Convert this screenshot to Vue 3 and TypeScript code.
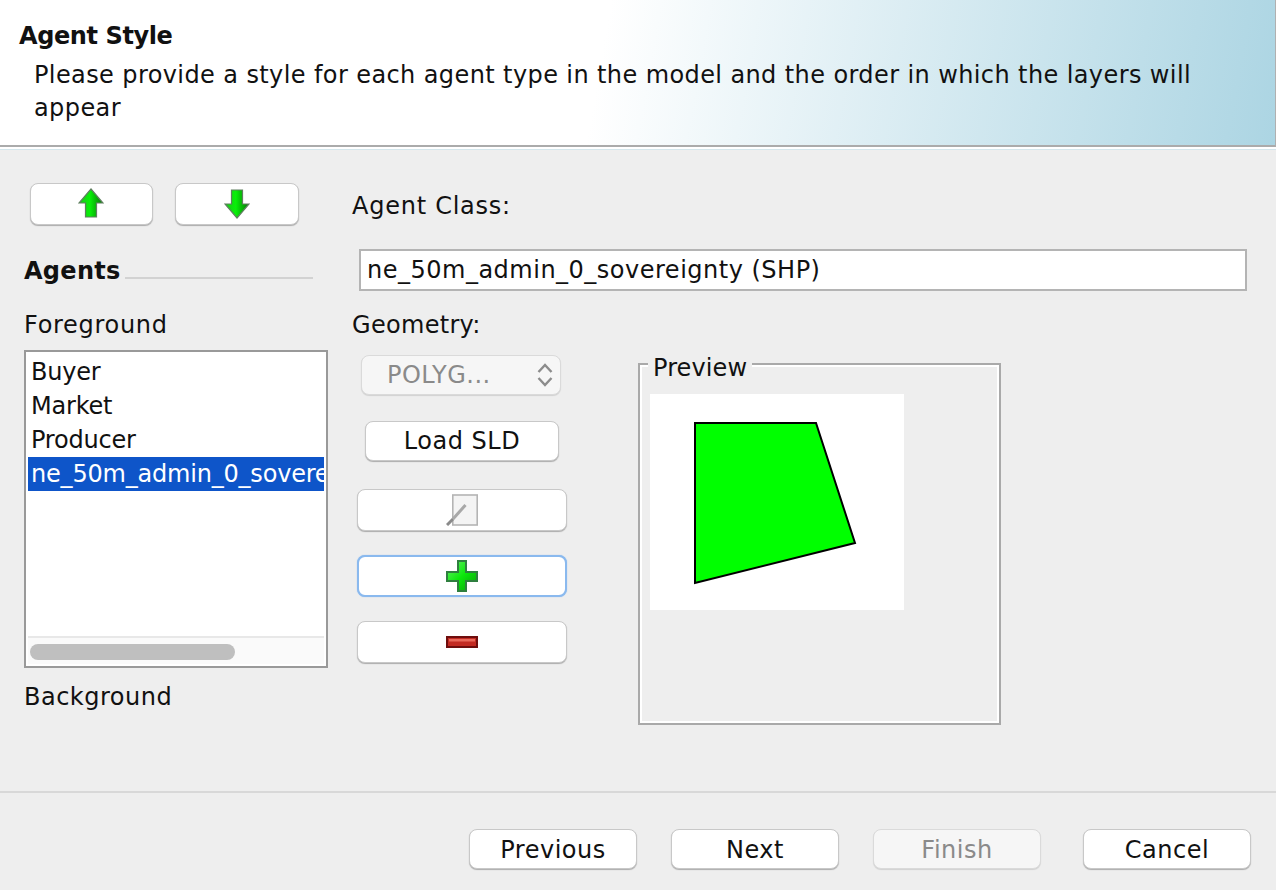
<script setup lang="ts">
const agents = ["Buyer", "Market", "Producer", "ne_50m_admin_0_sovereignty"]
const selected = 3
</script>

<template>
  <div class="wizard">
    <header class="banner">
      <h1>Agent Style</h1>
      <p>Please provide a style for each agent type in the model and the order in which the layers will appear</p>
    </header>
    <div class="banner-edge"></div>

    <main class="content">
      <section class="left">
        <div class="arrows">
          <button class="btn arrow">
            <svg class="up" width="26" height="30" viewBox="0 0 26 30">
              <defs>
                <linearGradient id="upFill" x1="0" x2="1" y1="0" y2="0">
                  <stop offset="0" stop-color="#1fc41f" />
                  <stop offset="0.45" stop-color="#08f008" />
                  <stop offset="0.7" stop-color="#07b807" />
                  <stop offset="1" stop-color="#067a06" />
                </linearGradient>
              </defs>
              <path d="M13 1 L25 15 H18.5 V29 H7.5 V15 H1 Z" fill="url(#upFill)" stroke="#5f7f5f" stroke-width="1.2" />
            </svg>
          </button>
          <button class="btn arrow wide">
            <svg width="26" height="30" viewBox="0 0 26 30">
              <path d="M13 29 L25 15 H18.5 V1 H7.5 V15 H1 Z" fill="url(#upFill)" stroke="#5f7f5f" stroke-width="1.2" />
            </svg>
          </button>
        </div>

        <div class="agents-head">
          <span>Agents</span>
          <i></i>
        </div>

        <div class="label foreground">Foreground</div>
        <div class="list">
          <ul>
            <li v-for="(a, i) in agents" :key="a" :class="{ sel: i === selected }">{{ a }}</li>
          </ul>
          <div class="hbar"><div class="thumb"></div></div>
        </div>
        <div class="label background">Background</div>
      </section>

      <section class="right">
        <div class="label class-label">Agent Class:</div>
        <input class="class-input" value="ne_50m_admin_0_sovereignty (SHP)" />

        <div class="lower">
          <div class="geometry">
            <div class="label geo-label">Geometry:</div>
            <div class="select">
              <span>POLYG...</span>
              <svg width="18" height="26" viewBox="0 0 18 26">
                <path d="M2.5 10 L9 3 L15.5 10 M2.5 16 L9 23 L15.5 16" fill="none" stroke="#8c8c8c" stroke-width="2.4" />
              </svg>
            </div>
            <button class="btn load">Load SLD</button>
            <button class="btn tool first">
              <svg width="32" height="32" viewBox="0 0 32 32">
                <rect x="6.8" y="1" width="24.4" height="30" fill="#f4f4f4" stroke="#b4b4b4" stroke-width="1.6" />
                <path d="M1 31 L7 25" stroke="#8a8a8a" stroke-width="3" />
                <path d="M7 25 L19.5 11" stroke="#a8a8a8" stroke-width="3" />
              </svg>
            </button>
            <button class="btn tool focus">
              <svg width="32" height="32" viewBox="0 0 32 32">
                <defs>
                  <linearGradient id="plusFill" x1="0" x2="1" y1="0" y2="1">
                    <stop offset="0" stop-color="#70ee70" />
                    <stop offset="0.5" stop-color="#0ce80c" />
                    <stop offset="1" stop-color="#079a07" />
                  </linearGradient>
                </defs>
                <path d="M12 1 H20 V12 H31 V21 H20 V31 H12 V21 H1 V12 H12 Z" fill="url(#plusFill)" stroke="#2f7f3f" stroke-width="2" />
              </svg>
            </button>
            <button class="btn tool">
              <svg width="32" height="12" viewBox="0 0 32 12">
                <rect x="1" y="1" width="30" height="10" fill="#c22a22" stroke="#6e0d0d" stroke-width="2" />
                <rect x="3" y="3" width="26" height="2.5" fill="#e8685a" />
              </svg>
            </button>
          </div>

          <div class="preview">
            <span class="legend">Preview</span>
            <div class="canvas">
              <svg width="254" height="216" viewBox="0 0 254 216">
                <polygon points="45,29 166,29 205,149 45,189" fill="#00ff00" stroke="#000" stroke-width="2" />
              </svg>
            </div>
          </div>
        </div>
      </section>
    </main>

    <footer class="actions">
      <button class="btn act">Previous</button>
      <button class="btn act">Next</button>
      <button class="btn act disabled">Finish</button>
      <button class="btn act cancel">Cancel</button>
    </footer>
  </div>
</template>

<style>
html,
body {
  margin: 0;
  background: #eeeeee;
}
</style>

<style scoped>
.wizard {
  width: 1276px;
  height: 890px;
  display: flex;
  flex-direction: column;
  overflow: hidden;
  background: #eeeeee;
  font-family: "DejaVu Sans", "Liberation Sans", sans-serif;
  font-size: 24px;
  letter-spacing: 0.5px;
  color: #111;
}
.banner {
  height: 145px;
  box-sizing: content-box;
  background: linear-gradient(100deg, #fff 47%, #acd5e3 100%);
  border-bottom: 2px solid #ababab;
  border-right: 1px solid #b0b0b0;
}
.banner h1 {
  margin: 0;
  padding: 20px 0 0 19px;
  font-size: 24px;
  line-height: 32px;
  font-weight: bold;
  letter-spacing: -0.4px;
}
.banner p {
  margin: 0;
  padding: 7px 60px 0 34px;
  line-height: 33px;
  letter-spacing: 0.4px;
}
.banner-edge {
  height: 3px;
  background: #fff;
  border-bottom: 1px solid #d4e6ec;
  box-sizing: border-box;
}
.content {
  flex: 1;
  display: flex;
}
.label {
  height: 30px;
  line-height: 30px;
}
.btn {
  display: block;
  box-sizing: border-box;
  margin: 0;
  padding: 0;
  background: #fff;
  border: 1px solid #c8c8c8;
  border-radius: 8px;
  box-shadow: 0 1px 1px rgba(0, 0, 0, 0.28);
  font: inherit;
  letter-spacing: inherit;
  color: inherit;
}
.left {
  width: 304px;
  margin-left: 24px;
}
.arrows {
  display: flex;
  gap: 22px;
  margin: 33px 0 0 6px;
}
.arrow {
  width: 123px;
  height: 42px;
  display: flex;
  align-items: center;
  justify-content: center;
}
.arrow.wide {
  width: 124px;
}
.arrow svg.up {
  margin: 0 1px 2px 0;
}
.agents-head {
  display: flex;
  align-items: center;
  height: 30px;
  margin-top: 31px;
  font-weight: bold;
  letter-spacing: 0.3px;
}
.agents-head i {
  width: 188px;
  height: 2px;
  margin: 14px 15px 0 auto;
  background: #d2d2d2;
}
.foreground {
  margin-top: 24px;
  letter-spacing: 0.7px;
}
.list {
  box-sizing: border-box;
  height: 318px;
  margin-top: 10px;
  border: 2px solid #999;
  background: #fff;
  padding: 2px;
  display: flex;
  flex-direction: column;
}
.list ul {
  flex: 1;
  margin: 0;
  padding: 1px 0 0;
  list-style: none;
  overflow: hidden;
}
.list li {
  height: 34px;
  line-height: 34px;
  padding-left: 3px;
  letter-spacing: -0.2px;
  white-space: nowrap;
  overflow: hidden;
}
.list li.sel {
  background: #0e55c9;
  color: #fff;
}
.hbar {
  height: 28px;
  box-sizing: border-box;
  border-top: 2px solid #e8e8e8;
  background: #fafafa;
  padding: 6px 0 0 2px;
}
.thumb {
  width: 205px;
  height: 16px;
  border-radius: 8px;
  background: #bfbfbf;
}
.background {
  margin-top: 14px;
}
.right {
  margin-left: 24px;
  width: 900px;
}
.class-label {
  margin-top: 41px;
  letter-spacing: 0.75px;
}
.class-input {
  display: block;
  box-sizing: border-box;
  width: 888px;
  height: 42px;
  margin: 28px 0 0 7px;
  padding: 0 6px;
  background: #fff;
  border: 2px solid #b4b4b4;
  outline: none;
  font: inherit;
  letter-spacing: inherit;
  color: inherit;
}
.lower {
  display: flex;
}
.geometry {
  width: 286px;
}
.geo-label {
  margin-top: 19px;
  letter-spacing: 0.3px;
}
.select {
  box-sizing: border-box;
  width: 200px;
  height: 40px;
  margin: 15px 0 0 9px;
  padding: 0 6px 0 25px;
  display: flex;
  align-items: center;
  justify-content: space-between;
  background: #f6f6f6;
  border: 1px solid #dadada;
  border-radius: 8px;
  box-shadow: 0 1px 1px rgba(0, 0, 0, 0.12);
  color: #8a8a8a;
}
.load {
  width: 194px;
  height: 40px;
  margin: 26px 0 0 13px;
}
.tool {
  width: 210px;
  height: 42px;
  margin: 24px 0 0 5px;
  display: flex;
  align-items: center;
  justify-content: center;
}
.tool.first {
  margin-top: 28px;
}
.tool.focus {
  border: 2px solid #8ab9ee;
  box-shadow: 0 0 1px #8ab9ee;
}
.preview {
  position: relative;
  box-sizing: border-box;
  width: 363px;
  height: 362px;
  margin-top: 72px;
  padding: 29px 0 0 10px;
  border: 2px solid #a9a9a9;
  box-shadow: inset 0 0 0 2px #fff;
}
.legend {
  position: absolute;
  left: 8px;
  top: -11px;
  padding: 0 5px;
  height: 28px;
  line-height: 28px;
  letter-spacing: 0.1px;
  background: #eeeeee;
}
.canvas {
  width: 254px;
  height: 216px;
  background: #fff;
}
.canvas svg {
  display: block;
}
.actions {
  box-sizing: border-box;
  height: 99px;
  border-top: 2px solid #d8d8d8;
  padding: 36px 25px 0 0;
  display: flex;
  justify-content: flex-end;
  gap: 34px;
}
.act {
  width: 168px;
  height: 40px;
  padding-top: 2px;
}
.act.disabled {
  background: #f6f6f6;
  border-color: #dadada;
  box-shadow: 0 1px 1px rgba(0, 0, 0, 0.12);
  color: #8a8a8a;
}
.act.cancel {
  margin-left: 8px;
}
</style>
